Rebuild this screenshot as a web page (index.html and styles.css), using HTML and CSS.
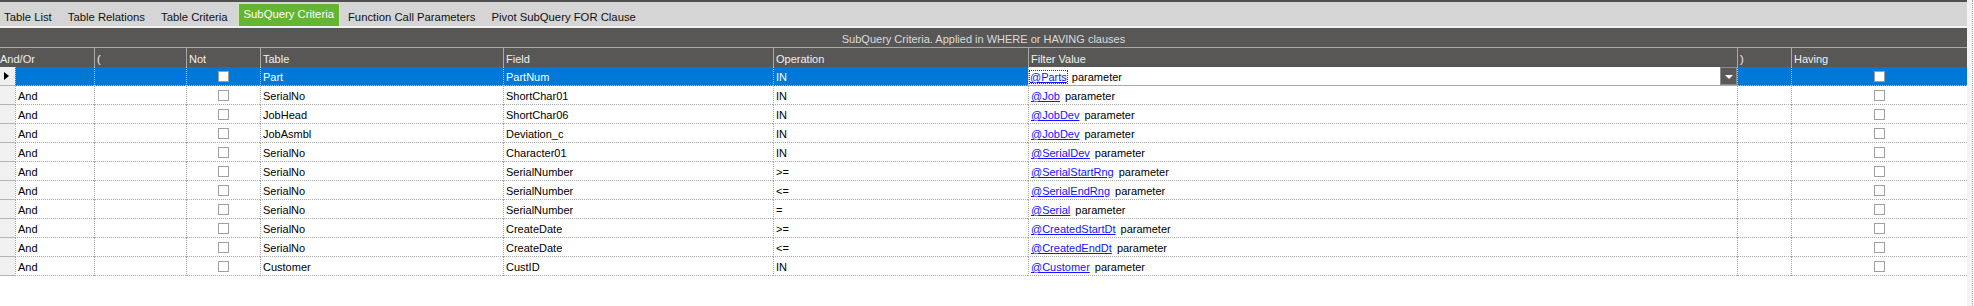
FILE: index.html
```html
<!DOCTYPE html>
<html lang="en">
<head>
  <meta charset="UTF-8" />
  <title>SubQuery Criteria</title>
  <link rel="stylesheet" href="styles.css">
</head>
<body>
  <div class="page">
    <div class="panel">
      <div class="top-strip"></div>

      <div class="tabs">
        <div class="tab first">Table List</div>
        <div class="tab">Table Relations</div>
        <div class="tab">Table Criteria</div>
        <div class="tab active">SubQuery Criteria</div>
        <div class="tab">Function Call Parameters</div>
        <div class="tab">Pivot SubQuery FOR Clause</div>
      </div>

      <div class="title-bar">SubQuery Criteria. Applied in WHERE or HAVING clauses</div>

      <div class="grid">
        <!-- header -->
        <div class="hcell span2">And/Or</div>
        <div class="hcell">(</div>
        <div class="hcell">Not</div>
        <div class="hcell">Table</div>
        <div class="hcell">Field</div>
        <div class="hcell">Operation</div>
        <div class="hcell">Filter Value</div>
        <div class="hcell">)</div>
        <div class="hcell">Having</div>

        <!-- selected row -->
        <div class="sel current"><span class="arrow"></span></div>
        <div class="cell hl"></div>
        <div class="cell hl"></div>
        <div class="cell hl center"><span class="check"></span></div>
        <div class="cell hl">Part</div>
        <div class="cell hl">PartNum</div>
        <div class="cell hl">IN</div>
        <div class="cell editor">
          <span class="editor-text"><a class="focused">@Parts</a><span class="param">parameter</span></span>
          <span class="drop"></span>
        </div>
        <div class="cell hl"></div>
        <div class="cell hl center"><span class="check"></span></div>

        <div class="sel"></div>
        <div class="cell">And</div><div class="cell"></div>
        <div class="cell center"><span class="check"></span></div>
        <div class="cell">SerialNo</div><div class="cell">ShortChar01</div><div class="cell">IN</div>
        <div class="cell"><a>@Job</a><span class="param">parameter</span></div>
        <div class="cell"></div><div class="cell center"><span class="check"></span></div>

        <div class="sel"></div>
        <div class="cell">And</div><div class="cell"></div>
        <div class="cell center"><span class="check"></span></div>
        <div class="cell">JobHead</div><div class="cell">ShortChar06</div><div class="cell">IN</div>
        <div class="cell"><a>@JobDev</a><span class="param">parameter</span></div>
        <div class="cell"></div><div class="cell center"><span class="check"></span></div>

        <div class="sel"></div>
        <div class="cell">And</div><div class="cell"></div>
        <div class="cell center"><span class="check"></span></div>
        <div class="cell">JobAsmbl</div><div class="cell">Deviation_c</div><div class="cell">IN</div>
        <div class="cell"><a>@JobDev</a><span class="param">parameter</span></div>
        <div class="cell"></div><div class="cell center"><span class="check"></span></div>

        <div class="sel"></div>
        <div class="cell">And</div><div class="cell"></div>
        <div class="cell center"><span class="check"></span></div>
        <div class="cell">SerialNo</div><div class="cell">Character01</div><div class="cell">IN</div>
        <div class="cell"><a>@SerialDev</a><span class="param">parameter</span></div>
        <div class="cell"></div><div class="cell center"><span class="check"></span></div>

        <div class="sel"></div>
        <div class="cell">And</div><div class="cell"></div>
        <div class="cell center"><span class="check"></span></div>
        <div class="cell">SerialNo</div><div class="cell">SerialNumber</div><div class="cell">&gt;=</div>
        <div class="cell"><a>@SerialStartRng</a><span class="param">parameter</span></div>
        <div class="cell"></div><div class="cell center"><span class="check"></span></div>

        <div class="sel"></div>
        <div class="cell">And</div><div class="cell"></div>
        <div class="cell center"><span class="check"></span></div>
        <div class="cell">SerialNo</div><div class="cell">SerialNumber</div><div class="cell">&lt;=</div>
        <div class="cell"><a>@SerialEndRng</a><span class="param">parameter</span></div>
        <div class="cell"></div><div class="cell center"><span class="check"></span></div>

        <div class="sel"></div>
        <div class="cell">And</div><div class="cell"></div>
        <div class="cell center"><span class="check"></span></div>
        <div class="cell">SerialNo</div><div class="cell">SerialNumber</div><div class="cell">=</div>
        <div class="cell"><a>@Serial</a><span class="param">parameter</span></div>
        <div class="cell"></div><div class="cell center"><span class="check"></span></div>

        <div class="sel"></div>
        <div class="cell">And</div><div class="cell"></div>
        <div class="cell center"><span class="check"></span></div>
        <div class="cell">SerialNo</div><div class="cell">CreateDate</div><div class="cell">&gt;=</div>
        <div class="cell"><a>@CreatedStartDt</a><span class="param">parameter</span></div>
        <div class="cell"></div><div class="cell center"><span class="check"></span></div>

        <div class="sel"></div>
        <div class="cell">And</div><div class="cell"></div>
        <div class="cell center"><span class="check"></span></div>
        <div class="cell">SerialNo</div><div class="cell">CreateDate</div><div class="cell">&lt;=</div>
        <div class="cell"><a>@CreatedEndDt</a><span class="param">parameter</span></div>
        <div class="cell"></div><div class="cell center"><span class="check"></span></div>

        <div class="sel"></div>
        <div class="cell">And</div><div class="cell"></div>
        <div class="cell center"><span class="check"></span></div>
        <div class="cell">Customer</div><div class="cell">CustID</div><div class="cell">IN</div>
        <div class="cell"><a>@Customer</a><span class="param">parameter</span></div>
        <div class="cell"></div><div class="cell center"><span class="check"></span></div>
      </div>
    </div>
    <div class="side"></div>
  </div>
</body>
</html>
```

FILE: styles.css
```css
* {
  box-sizing: border-box;
}
body {
  margin: 0;
  background: #fff;
  color: #000;
  font-family: 'Liberation Sans', Arial, sans-serif;
  font-size: 11px;
}
.page {
  display: flex;
  height: 306px;
}
.panel {
  width: 1967px;
}
.side {
  width: 7px;
  background: #f3f3f3;
  border-right: 1px dotted #a8a8a8;
  margin-right: 1px;
}
.top-strip {
  height: 2px;
  background: #505050;
}
.tabs {
  display: flex;
  align-items: flex-end;
  height: 26px;
  background: #d5d5d5;
  border-bottom: 2px solid #f2f2f2;
}
.tab {
  height: 21px;
  line-height: 20px;
  padding: 2px 8px 0;
  font-size: 11.3px;
  color: #111;
  white-space: nowrap;
}
.tab.first {
  padding-left: 4px;
}
.tab.active {
  height: 23px;
  line-height: 20px;
  margin: 0 0 0 2px;
  padding: 0 5px;
  background: #64b52f;
  color: #fff;
  border: 1px solid #cfe8bb;
  border-bottom: none;
  border-radius: 2px 2px 0 0;
}
.title-bar {
  height: 20px;
  line-height: 20px;
  padding-top: 1px;
  background: #595755;
  color: #dcdcdc;
  text-align: center;
  border-bottom: 1px solid #a8a8a8;
}
.grid {
  display: grid;
  grid-template-columns: 15px 79px 92px 74px 243px 270px 255px 709px 54px 176px;
  grid-auto-rows: 19px;
}
.grid .hcell {
  height: 20px;
  line-height: 20px;
  padding: 1px 0 0 2px;
  background: #595755;
  color: #f0f0f0;
  border-left: 1px solid #a8a8a8;
  border-bottom: 1px solid #a8a8a8;
  white-space: nowrap;
  overflow: hidden;
}
.grid .hcell.span2 {
  grid-column: span 2;
  border-left: none;
  padding-left: 0;
}
.sel {
  background: #f0f0f0;
  border-bottom: 1px solid #b4b4b4;
  position: relative;
}
.arrow {
  position: absolute;
  left: 4px;
  top: 5px;
  border-left: 5px solid #000;
  border-top: 4px solid transparent;
  border-bottom: 4px solid transparent;
}
.cell {
  height: 19px;
  line-height: 18px;
  padding: 1px 0 0 2px;
  border-left: 1px dotted #a8a8a8;
  border-bottom: 1px dotted #a8a8a8;
  white-space: nowrap;
  overflow: hidden;
}
.cell.hl {
  background: #0078d7;
  color: #fff;
  border-bottom-color: #9cc6ec;
  border-left-color: #9cc6ec;
}
.cell.center {
  display: flex;
  justify-content: center;
  align-items: center;
  padding: 0;
}
.check {
  display: block;
  width: 11px;
  height: 11px;
  background: #fff;
  border: 1px solid #a0a0a0;
}
.cell a {
  color: #1414ff;
  text-decoration: underline;
}
.param {
  margin-left: 5px;
}
.cell.editor {
  display: flex;
  padding: 0;
  background: #fff;
  border-bottom: 1px solid #a8a8a8;
}
.editor-text {
  flex: 1;
  padding: 1px 0 0 1px;
}
.editor-text a.focused {
  outline: 1px dotted #1a3aa8;
  outline-offset: 0;
}
.drop {
  width: 17px;
  height: 18px;
  background: #5b5957;
  border: 1px solid #8c8c8c;
  position: relative;
}
.drop::after {
  content: '';
  position: absolute;
  left: 4px;
  top: 7px;
  border-top: 4px solid #fff;
  border-left: 4px solid transparent;
  border-right: 4px solid transparent;
}
```
